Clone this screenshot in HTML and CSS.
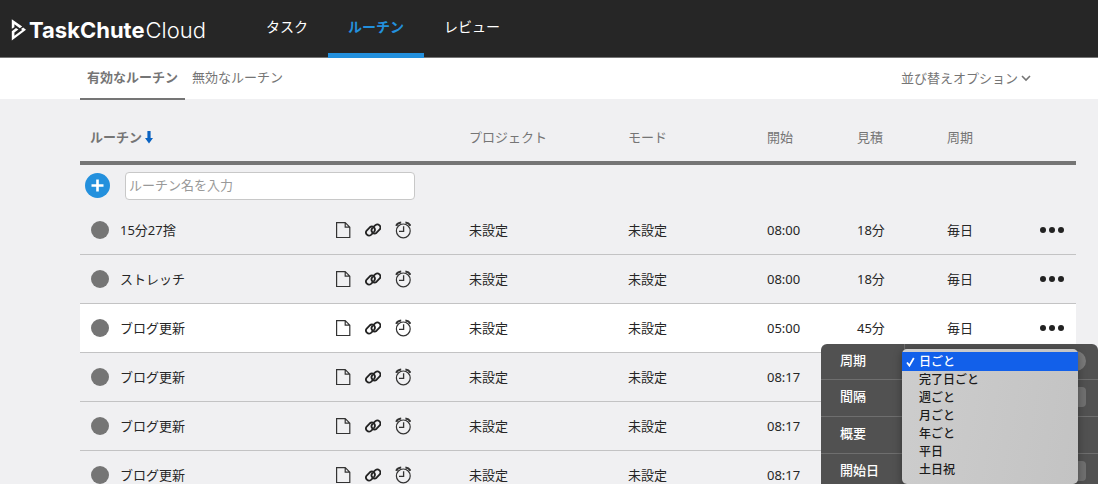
FILE: index.html
```html
<!DOCTYPE html>
<html lang="ja">
<head>
<meta charset="utf-8">
<meta name="viewport" content="width=device-width, initial-scale=1">
<title>TaskChute Cloud</title>
<link rel="stylesheet" href="styles.css">
</head>
<body>
<svg class="sprite" aria-hidden="true">
  <symbol id="file" viewBox="0 0 16 18"><path d="M1.6 1.6H10.2L14.8 6.2V16.5H1.6ZM10.2 1.6V6.2H14.8" fill="none" stroke="#333" stroke-width="1.2"/></symbol>
  <symbol id="link" viewBox="0 0 16 16"><g fill="none" stroke="#222" stroke-width="1.8" stroke-linecap="round"><path d="M7.6 11.4L6 12.9A3.1 3.1 0 0 1 1.7 8.5L4.8 5.3A3.1 3.1 0 0 1 9.2 9.6"/><path d="M8.8 4.6L10.4 3.1A3.1 3.1 0 0 1 14.7 7.5L11.6 10.7A3.1 3.1 0 0 1 7.2 6.4"/></g></symbol>
  <symbol id="clock" viewBox="0 0 16 18"><g fill="none" stroke="#333"><circle cx="8.3" cy="9.9" r="6.9" stroke-width="1.2"/><path d="M8.6 5.2V10.3H4" stroke-width="1.3"/><path d="M1.2 4.8Q2.4 2 6.2 1.6M15.4 4.8Q14.2 2 10.4 1.6" stroke-width="2"/></g></symbol>
</svg>

<header class="header">
  <a class="logo" href="#">
    <svg class="logo-mark" viewBox="0 0 15 22" aria-hidden="true"><g fill="#fff"><path d="M0.8 0.2L11.2 7.4L8.8 9.2L3.4 5.2V8.2L0.8 9.8Z"/><path d="M0.8 12.2L5 9L7.4 10.4L3.4 13.4V16.8L11.2 11L10 10L12.2 8.4L15 10.8L0.8 21.6Z"/></g></svg>
    <span class="logo-text"><b>TaskChute</b><span class="logo-light">Cloud</span></span>
  </a>
  <nav class="nav">
    <a href="#">タスク</a>
    <a href="#" class="current" aria-current="page">ルーチン</a>
    <a href="#">レビュー</a>
  </nav>
</header>

<div class="subbar">
  <nav class="tabs">
    <a href="#" class="current">有効なルーチン</a>
    <a href="#">無効なルーチン</a>
  </nav>
  <button class="sort" type="button">並び替えオプション<svg viewBox="0 0 10 8" width="10" height="8" aria-hidden="true"><path d="M1 2L5 6L9 2" fill="none" stroke="#757575" stroke-width="1.6"/></svg></button>
</div>

<main class="main">
  <table class="routines">
    <colgroup>
      <col><col class="col-project"><col class="col-mode"><col class="col-time"><col class="col-time"><col class="col-time"><col class="col-more">
    </colgroup>
    <thead>
      <tr>
        <th class="sorted" scope="col">ルーチン<svg viewBox="0 0 8 13" width="8" height="13" aria-hidden="true"><path d="M2.4 0H5.6V7H8L4 12.5L0 7H2.4Z" fill="#0a63c2"/></svg></th>
        <th scope="col">プロジェクト</th><th scope="col">モード</th><th scope="col">開始</th><th scope="col">見積</th><th scope="col">周期</th><td></td>
      </tr>
    </thead>
    <tbody>
      <tr class="add-row">
        <td colspan="7">
          <form class="add">
            <button class="add-button" type="button" aria-label="追加"><svg viewBox="0 0 25 25" width="25" height="25" aria-hidden="true"><path d="M12.5 6.5V18.5M6.5 12.5H18.5" stroke="#fff" stroke-width="2.6"/></svg></button>
            <input class="add-input" type="text" aria-label="ルーチン名" placeholder="ルーチン名を入力">
          </form>
        </td>
      </tr>
      <tr>
        <td><div class="name"><span class="dot"></span><span>15分27捨</span><span class="icons"><svg class="tall"><use href="#file"/></svg><svg><use href="#link"/></svg><svg class="tall"><use href="#clock"/></svg></span></div></td>
        <td>未設定</td><td>未設定</td><td>08:00</td><td>18分</td><td>毎日</td>
        <td><button class="more" type="button" aria-label="メニュー"><i></i><i></i><i></i></button></td>
      </tr>
      <tr>
        <td><div class="name"><span class="dot"></span><span>ストレッチ</span><span class="icons"><svg class="tall"><use href="#file"/></svg><svg><use href="#link"/></svg><svg class="tall"><use href="#clock"/></svg></span></div></td>
        <td>未設定</td><td>未設定</td><td>08:00</td><td>18分</td><td>毎日</td>
        <td><button class="more" type="button" aria-label="メニュー"><i></i><i></i><i></i></button></td>
      </tr>
      <tr class="active">
        <td><div class="name"><span class="dot"></span><span>ブログ更新</span><span class="icons"><svg class="tall"><use href="#file"/></svg><svg><use href="#link"/></svg><svg class="tall"><use href="#clock"/></svg></span></div></td>
        <td>未設定</td><td>未設定</td><td>05:00</td><td>45分</td><td>毎日</td>
        <td class="anchor"><button class="more" type="button" aria-label="メニュー"><i></i><i></i><i></i></button>
          <div class="panel">
            <div class="field"><label for="cycle">周期</label><div class="control"><select id="cycle" class="pill"><option>日ごと</option><option>完了日ごと</option><option>週ごと</option><option>月ごと</option><option>年ごと</option><option>平日</option><option>土日祝</option></select></div></div>
            <div class="field"><label for="interval">間隔</label><div class="control"><input id="interval" type="text"></div></div>
            <div class="field"><span class="label">概要</span><div class="control"></div></div>
            <div class="field"><label for="start">開始日</label><div class="control"><input id="start" type="text"></div></div>
            <ul class="menu" role="listbox" aria-label="周期">
              <li role="option" aria-selected="true"><svg viewBox="0 0 9 10" width="9" height="10" aria-hidden="true"><path d="M1 5.5L3.4 8.6L7.8 1" fill="none" stroke="#fff" stroke-width="1.8"/></svg>日ごと</li>
              <li role="option">完了日ごと</li>
              <li role="option">週ごと</li>
              <li role="option">月ごと</li>
              <li role="option">年ごと</li>
              <li role="option">平日</li>
              <li role="option">土日祝</li>
            </ul>
          </div>
        </td>
      </tr>
      <tr>
        <td><div class="name"><span class="dot"></span><span>ブログ更新</span><span class="icons"><svg class="tall"><use href="#file"/></svg><svg><use href="#link"/></svg><svg class="tall"><use href="#clock"/></svg></span></div></td>
        <td>未設定</td><td>未設定</td><td>08:17</td><td></td><td></td><td></td>
      </tr>
      <tr>
        <td><div class="name"><span class="dot"></span><span>ブログ更新</span><span class="icons"><svg class="tall"><use href="#file"/></svg><svg><use href="#link"/></svg><svg class="tall"><use href="#clock"/></svg></span></div></td>
        <td>未設定</td><td>未設定</td><td>08:17</td><td></td><td></td><td></td>
      </tr>
      <tr>
        <td><div class="name"><span class="dot"></span><span>ブログ更新</span><span class="icons"><svg class="tall"><use href="#file"/></svg><svg><use href="#link"/></svg><svg class="tall"><use href="#clock"/></svg></span></div></td>
        <td>未設定</td><td>未設定</td><td>08:17</td><td></td><td></td><td></td>
      </tr>
    </tbody>
  </table>
</main>
</body>
</html>
```
FILE: styles.css
```css
* { box-sizing: border-box; }

body {
  margin: 0;
  height: 100vh;
  overflow: hidden;
  background: #f0f0f2;
  color: #262626;
  font: 13px/20px "Noto Sans", "Noto Sans CJK JP", sans-serif;
}

a { color: inherit; text-decoration: none; }

button, input, select { font: inherit; color: inherit; }

button { border: 0; padding: 0; background: none; }

.sprite { position: absolute; width: 0; height: 0; }

.header {
  display: flex;
  height: 58px;
  background: #262626;
  border-bottom: 1px solid #757575;
  color: #fff;
}

.logo {
  display: flex;
  align-items: center;
  gap: 3px;
  width: 246px;
  padding: 2px 0 0 11px;
}

.logo-mark { width: 15px; height: 22px; }

.logo-text { font: 22px/28px Inter, sans-serif; }

.logo-text b { font-weight: 700; }

.logo-light { font-weight: 300; margin-left: 1px; }

.nav { display: flex; margin-bottom: -1px; }

.nav a {
  display: flex;
  align-items: center;
  padding: 0 20px;
  font-size: 14px;
  border-bottom: 5px solid transparent;
}

.nav .current { color: #2390dd; border-bottom-color: #2390dd; font-weight: 700; }

.subbar {
  display: flex;
  justify-content: space-between;
  height: 41px;
  padding: 0 67px 0 80px;
  background: #fff;
  color: #757575;
}

.tabs { display: flex; margin-bottom: -1px; }

.tabs a {
  padding: 9px 7px;
  border-bottom: 2px solid transparent;
}

.tabs .current { font-weight: 700; border-bottom-color: #757575; }

.sort { display: flex; align-items: center; gap: 3px; padding-bottom: 2px; }

.main { padding: 0 22px 0 80px; }

.routines {
  width: 100%;
  table-layout: fixed;
  border-spacing: 0;
}

.col-project { width: 159px; }
.col-mode { width: 139px; }
.col-time { width: 90px; }
.col-more { width: 40px; }

th, td { padding: 0 0 0 1px; text-align: left; }

td:first-child { padding-left: 0; }

thead th, thead td {
  height: 66px;
  padding-top: 14px;
  border-bottom: 4px solid #757575;
  color: #757575;
  font-weight: 400;
}

thead .sorted { padding-left: 10px; font-weight: 700; }

.sorted svg { margin-left: 3px; vertical-align: -2px; }

tbody td { height: 49px; border-bottom: 1px solid #c3c3c4; }

.add-row td { height: 41px; border: 0; }

.add { display: flex; align-items: center; gap: 15px; margin: 0; padding-left: 5px; }

.add-button {
  width: 25px;
  height: 25px;
  border-radius: 50%;
  background: #2390dd;
}

.add-button svg { display: block; }

.add-input {
  width: 290px;
  height: 28px;
  padding: 0 3px 2px;
  border: 1px solid #c8c8c8;
  border-radius: 4px;
  background: #fff;
}

.add-input::placeholder { color: #999; }

.active td { background: #fff; }

.name { display: flex; align-items: center; padding: 0 57px 0 11px; }

.dot {
  width: 18px;
  height: 18px;
  margin-right: 11px;
  border-radius: 50%;
  background: #757575;
}

.icons { display: flex; align-items: center; gap: 14px; margin-left: auto; }

.icons svg { width: 16px; height: 16px; }

.icons .tall { height: 18px; }

.more { display: flex; gap: 3px; padding: 6px 3px; }

.more i { width: 6px; height: 6px; border-radius: 50%; background: #222; }

.anchor { position: relative; }

.panel {
  position: absolute;
  top: 40px;
  right: -22px;
  width: 277px;
  border-radius: 6px;
  background: #515151;
  color: #fff;
  font-weight: 500;
}

.field {
  display: grid;
  grid-template-columns: 84px 1fr;
  height: 37px;
  border-bottom: 1px solid #6e6e6e;
}

.field:first-child { height: 36px; }

.field label, .label {
  padding: 6px 0 0 19px;
  border-right: 1px solid #6e6e6e;
}

.control { display: flex; align-items: center; padding: 0 12px 2px 10px; }

.control input, .control select {
  appearance: none;
  width: 100%;
  height: 20px;
  border: 0;
  border-radius: 4px;
  background: #707070;
}

.control .pill { padding: 0 10px; border-radius: 10px; background: #7a7a7a; }

.menu {
  position: absolute;
  top: 5px;
  right: 20px;
  width: 176px;
  margin: 0;
  padding: 3px 0 5px;
  border-radius: 5px;
  background: linear-gradient(100deg, #cdcdcd, #c3c3c3);
  box-shadow: 0 2px 8px rgba(0, 0, 0, 0.35);
  color: #1a1a1a;
  font-size: 12px;
  line-height: 18px;
  list-style: none;
}

.menu li { padding-left: 17px; }

.menu [aria-selected] {
  display: flex;
  align-items: center;
  gap: 4px;
  padding-left: 4px;
  background: #1260ea;
  color: #fff;
  line-height: 19px;
}
```
